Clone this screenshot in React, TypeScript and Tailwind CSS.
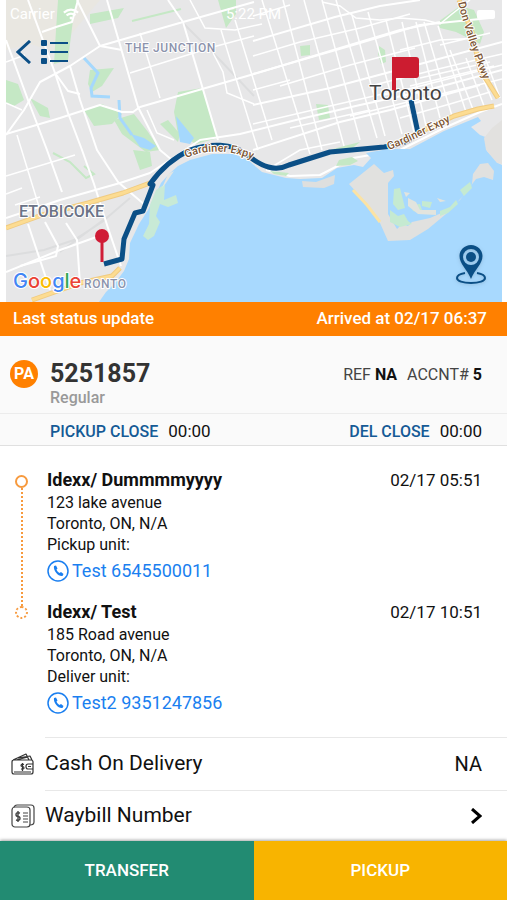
import { useState } from 'react';

interface Stop {
  name: string;
  time: string;
  street: string;
  city: string;
  unit: string;
  contact: string;
  phone: string;
}

const stops: Stop[] = [
  {
    name: 'Idexx/ Dummmmyyyy',
    time: '02/17 05:51',
    street: '123 lake avenue',
    city: 'Toronto, ON, N/A',
    unit: 'Pickup unit:',
    contact: 'Test',
    phone: '6545500011',
  },
  {
    name: 'Idexx/ Test',
    time: '02/17 10:51',
    street: '185 Road avenue',
    city: 'Toronto, ON, N/A',
    unit: 'Deliver unit:',
    contact: 'Test2',
    phone: '9351247856',
  },
];

const majorRoads = [
  'M28 0L55 73L68 113L82 150L94 184L108 228L121 266',
  'M6 40L28 100L47 150L62 192',
  'M6 135L24 110L40 82L70 66L100 46L183 22L254 2',
  'M6 134L60 118L100 105L122 112L133 112L140 107L254 74L340 48L400 30L440 22',
  'M77 0L100 46L122 50',
  'M107 0L138 107L160 150L172 160',
  'M168 0L183 22L218 140',
  'M70 66L80 100L97 150L118 182L125 188L145 205',
  'M55 73L68 91L80 94',
  'M6 218L60 200L120 183L150 173L200 140L240 134L300 119L360 105L420 92L502 70',
  'M6 272L60 250L102 235',
  'M28 224L50 290M45 222L58 246L56 256L20 266M66 223L77 240L80 284',
  'M78 0L72 22L56 27L42 32',
  'M253 41L335 17L380 6L420 0',
  'M253 74L360 43L420 25L490 18',
  'M253 105L330 88L420 64L502 42',
  'M253 150L340 122L390 110L480 85',
  'M266 170L290 176L320 175L353 158L400 150L444 128L480 112L502 104',
];

const minorRoads = [
  'M140 33L160 98M130 73L213 47L254 36M213 53L223 72L227 93L254 104',
  'M221 30L258 150M235 20L272 140M190 0L205 28L235 30L262 24',
  'M147 110L157 133L174 140M6 103L22 110M6 62L25 55M6 194L22 188M15 205L40 197',
  'M17 135L40 210M6 176L75 155',
  'M262 0L310 154M283 0L322 150M304 0L344 146M322 0L360 140M336 0L377 138M352 15L385 136',
  'M368 12L402 134M386 20L414 132M402 22L426 126M416 22L440 118M424 22L452 116M438 26L466 112',
  'M450 50L474 112M466 58L484 106M476 62L492 100M486 60L500 98',
  'M253 16L290 5M253 56L300 42M300 42L360 28L410 14M280 86L350 65L415 48',
  'M370 86L430 71L480 59L502 54M380 96L440 81L502 65M350 116L420 99L470 87L502 79',
  'M400 118L450 104L490 92M420 78L490 62M410 86L494 66M253 124L330 106L400 90',
  'M270 168L300 150L340 142M253 90L290 80M290 128L370 110M400 50L440 40L480 38M440 45L490 33',
  'M322 2L340 6L356 18L380 20L400 18L425 20L440 24L452 14L470 0',
];

const parks = [
  'M58 0L78 0L73 20L68 60L54 64L56 30Z',
  'M178 92L202 88L218 138L196 144L178 134L174 112Z',
  'M6 80L18 84L24 100L14 106L6 103Z',
  'M84 110L102 104L122 114L112 124L94 126Z',
  'M114 120L134 114L148 132L160 150L146 152L122 134Z',
  'M90 70L114 68L102 86L92 92L88 84Z',
  'M90 14L124 8L118 18L90 24Z',
  'M30 98L48 108L50 118L40 116Z',
  'M160 124L168 120L180 134L178 142Z',
  'M133 150L150 152L152 166L140 170Z',
  'M438 22L460 6L474 10L484 32L480 44L456 32L440 28Z',
  'M300 46L310 45L310 55L301 56Z',
  'M316 104L328 105L330 118L319 120Z',
  'M379 46L385 50L386 62L381 64L378 54Z',
  'M218 0L236 0L236 14L226 28Z',
  'M344 146L360 142L350 150L330 150Z',
];

const routePath =
  'M104 264L122 259L124 239L135 213L143 211L153 185L150 184C160 170 175 157 190 150C210 143 232 143 246 154C262 167 275 172 289 165L330 152L384 147C400 145 412 140 418 133L411 100';

const MapView = () => (
  <svg
    viewBox="6 0 496 302"
    preserveAspectRatio="xMidYMid slice"
    className="block h-full w-full"
    role="img"
    aria-label="Delivery route map"
  >
    <rect x="6" width="496" height="302" fill="#e7e7e8" />
    <path d="M6 0H100L56 52L30 44L6 50Z" fill="#e9e7e1" />

    {parks.map(d => (
      <path key={d} d={d} fill="#c5e8c5" />
    ))}
    <path
      d="M53 153L70 162L86 178L94 174L84 166M132 21L181 9"
      fill="none"
      stroke="#c5e8c5"
      strokeWidth="2"
    />
    <path
      d="M84 58L98 73L91 88L92 96L110 97M119 100L120 118L132 135"
      fill="none"
      stroke="#a5d8fd"
      strokeWidth="3"
    />
    <path d="M176 116L194 138L190 144L180 142Z" fill="#a5d8fd" />
    <path d="M131 134L144 138L156 146L150 150L140 147Z" fill="#a5d8fd" />
    <path
      d="M6 256L44 250L74 240L102 222L130 198M180 20L220 60L254 96M60 252L110 215"
      fill="none"
      stroke="#dcddde"
      strokeWidth="2"
    />

    {minorRoads.map(d => (
      <path key={d} d={d} fill="none" stroke="#fff" strokeWidth="1.5" />
    ))}
    {majorRoads.map(d => (
      <path key={d} d={d} fill="none" stroke="#fff" strokeWidth="2" strokeLinejoin="round" />
    ))}

    {/* lake and shoreline */}
    <path
      d="M99 302L106 292L115 283L124 271L129 259L130 243L139 224L148 210L155 196L161 183L169 174L178 166L190 160L212 154L234 154L248 160L262 172L286 178L300 179L322 178L337 168L354 165L363 167L371 158L366 153L388 149L410 149L444 131L478 117L481 121L471 127L480 135L488 138L487 151L498 163L502 165V302Z"
      fill="#a8d9fe"
    />
    <path d="M484 138L492 128L502 120V164L497 163L486 150Z" fill="#e2e1df" />
    <path d="M302 181L316 182L335 175L334 184L324 188L303 187Z" fill="#dedfde" />
    <path d="M270 171L289 173L286 176L274 174Z" fill="#c5e8c5" />
    <path d="M339 160L352 157L358 161L350 165L336 166Z" fill="#c5e8c5" />
    <path
      d="M349 184L374 164L384 173L393 170L394 176L388 183L388 214L397 229L402 224L408 226L412 222L430 218L446 211L460 200L472 184L473 174L480 164L488 163L494 171L493 180L484 177L476 179L464 195L446 214L428 229L410 240L388 241L380 223L368 205Z"
      fill="#e1e1df"
    />
    <path
      d="M394 189L400 188L405 208L398 210L393 204ZM390 210L398 216L404 214L408 221L412 224L400 227L390 222ZM411 205L420 204L423 213L413 211ZM422 201L432 202L430 208L422 206ZM440 211L450 207L456 200L458 204L448 213L440 216ZM460 190L470 182L472 188L464 196Z"
      fill="#c5ead1"
    />
    <path d="M408 198L416 202L420 210L436 210L436 215L418 214L408 206ZM437 198L446 201L440 202ZM404 192L410 193L406 197Z" fill="#e2e4de" />
    <path d="M353 190L367 205L380 222" fill="none" stroke="#fbe3a5" strokeWidth="3" />
    <path
      d="M156 190L165 184L164 200L176 195L178 203L168 207L160 204L156 216L160 222L154 236L148 240L143 236L149 224L150 205Z"
      fill="#c8ead6"
    />
    <path d="M168 174L174 171L166 183L162 188Z" fill="#e4e6e3" />

    {/* highways */}
    <g fill="none" strokeLinejoin="round">
      <path
        d="M6 228L42 215L88 203L123 193L150 183M32 300L80 283L112 276L120 268"
        stroke="#f0cb80"
        strokeWidth="5"
      />
      <path
        d="M6 228L42 215L88 203L123 193L150 183M32 300L80 283L112 276L120 268"
        stroke="#fcdc92"
        strokeWidth="3"
      />
      <path d="M420 132L454 116L478 109L494 106M459 0L472 32L480 70L488 82L498 98" stroke="#f0cb80" strokeWidth="5" />
      <path d="M420 132L454 116L478 109L494 106M459 0L472 32L480 70L488 82L498 98" stroke="#fcdc92" strokeWidth="3" />
    </g>

    <path d={routePath} fill="none" stroke="#0b4f86" strokeWidth="5" strokeLinejoin="round" />

    <defs>
      <path id="gardiner-west" d="M186 158C206 149 232 148 262 164" />
      <path id="gardiner-east" d="M389 150C408 143 430 131 460 117" />
      <path id="valley" d="M458 3C465 28 473 58 492 98" />
    </defs>
    <g className="font-[Roboto,sans-serif]" stroke="#fff" paintOrder="stroke" strokeLinejoin="round">
      <g fill="#7c5634" fontSize="11" fontWeight="500" strokeWidth="2">
        <text>
          <textPath href="#gardiner-west">Gardiner Expy</textPath>
        </text>
        <text>
          <textPath href="#gardiner-east">Gardiner Expy</textPath>
        </text>
        <text>
          <textPath href="#valley">Don Valley Pkwy</textPath>
        </text>
      </g>
      <text x="125" y="52" fill="#8c93ac" fontSize="12" fontWeight="500" strokeWidth="2" className="tracking-wider">
        THE JUNCTION
      </text>
      <text x="19" y="217" fill="#6b7387" fontSize="16" fontWeight="500" strokeWidth="2">
        ETOBICOKE
      </text>
      <text x="84" y="288" fill="#8c93ac" fontSize="12" fontWeight="500" strokeWidth="2" className="tracking-wider">
        RONTO
      </text>
      <text x="369" y="100" fill="#444" fontSize="21" strokeWidth="2">
        Toronto
      </text>
      <text x="13" y="288" fontSize="20" strokeWidth="2" className="font-[Inter,sans-serif] font-medium">
        <tspan fill="#4285f4">G</tspan>
        <tspan fill="#ea4335">o</tspan>
        <tspan fill="#fbbc05">o</tspan>
        <tspan fill="#4285f4">g</tspan>
        <tspan fill="#34a853">l</tspan>
        <tspan fill="#ea4335">e</tspan>
      </text>
    </g>

    {/* pickup pin and delivery flag */}
    <path d="M102 238V262" stroke="#d01c36" strokeWidth="3" />
    <circle cx="102" cy="236" r="7" fill="#d01c36" />
    <path d="M392 57H416Q419 57 419 60V75Q419 78 416 78H396V90H392Z" fill="#cc1c30" />
  </svg>
);

const LocateIcon = () => (
  <svg viewBox="0 0 32 42" className="h-[42px] w-8" fill="none">
    <path
      d="M10 29C4 30 2 32 2 34C2 37 8 39 16 39C24 39 30 37 30 34C30 32 28 30 22 29"
      stroke="#0b4f86"
      strokeWidth="2"
    />
    <path
      fillRule="evenodd"
      d="M16 1C9.500 1 4.500 6 4.500 12C4.500 20 12 25 16 35C20 25 27.500 20 27.500 12C27.500 6 22.500 1 16 1ZM16 5A8 8 0 1 1 16 21A8 8 0 1 1 16 5Z"
      fill="#0b4f86"
    />
    <circle cx="16" cy="13" r="5" fill="#0b4f86" />
  </svg>
);

const PhoneIcon = () => (
  <svg viewBox="0 0 22 22" className="h-[22px] w-[22px] shrink-0" fill="none">
    <circle cx="11" cy="11" r="10" stroke="#1a7ff0" strokeWidth="1.5" />
    <path
      d="M7 6L9 5.500L10.500 8.500L9.500 9.500C10 11 11 12 12.500 13L14 12L16.500 14L15.500 16C12 17 6 11 7 6Z"
      fill="#1a7ff0"
    />
  </svg>
);

const WalletIcon = () => (
  <svg viewBox="0 0 24 24" className="h-6 w-6 shrink-0" fill="none" stroke="#333" strokeWidth="1.2" strokeLinejoin="round">
    <path d="M3 8H20Q22 8 22 10V20Q22 22 20 22H3Q1 22 1 20V10Q1 8 3 8ZM2 8L15 2L18 8M7 6L19 4L21 8M5 8L17 5" />
    <path d="M22 12H17Q15 12 15 14.500Q15 17 17 17H22M17 14.500H20M3 20H20" />
    <path d="M13 12.500Q10 11.500 10 13.500Q10 14.500 11.500 14.500Q13 14.500 13 16Q13 17.500 10 17M11.500 11V19" />
  </svg>
);

const WaybillIcon = () => (
  <svg viewBox="0 0 24 24" className="h-6 w-6 shrink-0" fill="none" stroke="#444" strokeWidth="1.2" strokeLinejoin="round">
    <rect x="1" y="3" width="18" height="20" rx="3" />
    <path d="M3 3Q4 1 6 1H20Q23 1 23 4V18Q23 21 19 21" />
    <path d="M9 9Q5 8 5 10.500Q5 12.500 7 12.500Q9 12.500 9 14.500Q9 17 5 16M7 7V18" strokeWidth="1.400" />
    <path d="M12 9H17M12 12H17M12 15H17M12 18H17" />
  </svg>
);

const StatusBar = () => (
  <div className="absolute inset-x-0 top-1 grid grid-cols-3 items-center px-[10px] text-[15px] leading-5 text-white">
    <div className="flex items-center gap-2">
      Carrier
      <svg viewBox="0 0 18 13" className="h-3 w-4" fill="none" stroke="#fff" strokeWidth="2.500">
        <path d="M1 5Q9 -2 17 5M4 8Q9 4 14 8" />
        <path d="M9 9L11 11L9 13L7 11Z" fill="#fff" stroke="none" />
      </svg>
    </div>
    <div className="text-center">5:22 PM</div>
    <div className="mr-[2px] h-[9px] w-[18px] justify-self-end rounded-xs bg-white" />
  </div>
);

const StopCard = ({ stop }: { stop: Stop }) => (
  <li className="text-base leading-[21px]">
    <div className="flex justify-between leading-6">
      <h2 className="text-lg leading-6 font-bold">{stop.name}</h2>
      <time className="text-[17px]">{stop.time}</time>
    </div>
    <p>{stop.street}</p>
    <p>{stop.city}</p>
    <p>{stop.unit}</p>
    <a href={`tel:${stop.phone}`} className="mt-1 flex h-6 items-center gap-[3px] text-lg text-[#1a7ff0]">
      <PhoneIcon />
      {stop.contact} {stop.phone}
    </a>
  </li>
);

export default function App() {
  const [showWaybill, setShowWaybill] = useState(false);

  return (
    <div className="flex min-h-screen flex-col bg-white font-[Roboto,sans-serif] text-[#111]">
      <header className="relative h-[302px] pr-[5px] pl-[6px]">
        <MapView />
        <StatusBar />
        <nav className="absolute top-10 left-4 flex items-center gap-[10px] text-[#0b4f86]">
          <button type="button" aria-label="Back">
            <svg viewBox="0 0 15 24" className="block h-6 w-[15px]" fill="none" stroke="currentColor" strokeWidth="3">
              <path d="M14 1L2 12L14 23" />
            </svg>
          </button>
          <button type="button" aria-label="Orders list">
            <svg viewBox="0 0 28 24" className="block h-6 w-7" fill="currentColor">
              <rect width="6" height="6" rx="1" />
              <rect y="9" width="6" height="6" rx="1" />
              <rect y="18" width="6" height="6" rx="1" />
              <path d="M9 2H27V4H9ZM9 11H27V13H9ZM9 20H27V22H9Z" />
            </svg>
          </button>
        </nav>
        <button type="button" aria-label="My location" className="absolute right-5 bottom-4 drop-shadow">
          <LocateIcon />
        </button>
      </header>

      <div className="flex h-[34px] items-center justify-between bg-[#ff8000] pr-5 pl-[13px] text-[17px] font-medium text-white">
        <span>Last status update</span>
        <span>Arrived at 02/17 06:37</span>
      </div>

      <section className="bg-[#fafafa]">
        <div className="flex h-[78px] items-center justify-between border-b border-[#ececec] pr-[25px] pl-[10px]">
          <div className="grid grid-cols-[28px_auto] items-center gap-x-3 pt-[18px]">
            <span className="flex h-7 items-center justify-center rounded-full bg-[#ff8000] text-base font-bold text-white">
              PA
            </span>
            <h1 className="text-[25px] leading-7 font-bold text-[#333]">5251857</h1>
            <p className="col-start-2 text-base leading-5 font-medium text-[#999]">Regular</p>
          </div>
          <p className="flex gap-[10px] text-base text-[#444]">
            <span>
              REF <b className="text-[#111]">NA</b>
            </span>
            <span>
              ACCNT# <b className="text-[#111]">5</b>
            </span>
          </p>
        </div>
        <div className="flex h-8 items-center justify-between border-b border-[#e0e0e0] pt-1 pr-[25px] pl-[50px] text-base">
          <p className="flex items-center gap-[10px]">
            <span className="font-medium text-[#155a96]">PICKUP CLOSE</span>
            <span className="text-[17px]">00:00</span>
          </p>
          <p className="flex items-center gap-[10px]">
            <span className="font-medium text-[#155a96]">DEL CLOSE</span>
            <span className="text-[17px]">00:00</span>
          </p>
        </div>
      </section>

      <main className="flex-1">
        <div className="flex pt-[22px] pr-[25px] pl-[15px]">
          <div className="mt-[7px] mr-[19px] flex h-[144px] w-[13px] flex-col items-center">
            <span className="h-[13px] w-[13px] rounded-full border-2 border-[#f79a3e]" />
            <span className="flex-1 border-l-2 border-dotted border-[#f79a3e]" />
            <span className="h-[13px] w-[13px] rounded-full border-2 border-dotted border-[#f79a3e]" />
          </div>
          <ul className="flex flex-1 flex-col gap-[17px]">
            {stops.map(stop => (
              <StopCard key={stop.phone} stop={stop} />
            ))}
          </ul>
        </div>

        <div className="mt-[22px] pl-[11px] text-[21px]">
          <div className="flex items-center gap-[10px]">
            <WalletIcon />
            <div className="flex h-[53px] flex-1 items-center justify-between border-t border-[#e8e8e8] pr-[25px]">
              <span>Cash On Delivery</span>
              <span className="text-xl">NA</span>
            </div>
          </div>
          <button
            type="button"
            aria-expanded={showWaybill}
            onClick={() => setShowWaybill(prev => !prev)}
            className="flex w-full items-center gap-[10px] text-left"
          >
            <WaybillIcon />
            <span className="flex h-[51px] flex-1 items-center justify-between border-t border-[#e8e8e8] pr-[25px]">
              <span>Waybill Number</span>
              <svg viewBox="0 0 11 16" className="h-4 w-[11px]" fill="none" stroke="#000" strokeWidth="3">
                <path d="M1 1L9 8L1 15" />
              </svg>
            </span>
          </button>
        </div>
      </main>

      <footer className="grid h-[59px] grid-cols-2 text-[17px] font-medium text-white shadow-[0_-1px_3px_rgba(0,0,0,0.35)]">
        <button type="button" className="bg-[#228b72]">
          TRANSFER
        </button>
        <button type="button" className="bg-[#f8b400]">
          PICKUP
        </button>
      </footer>
    </div>
  );
}
